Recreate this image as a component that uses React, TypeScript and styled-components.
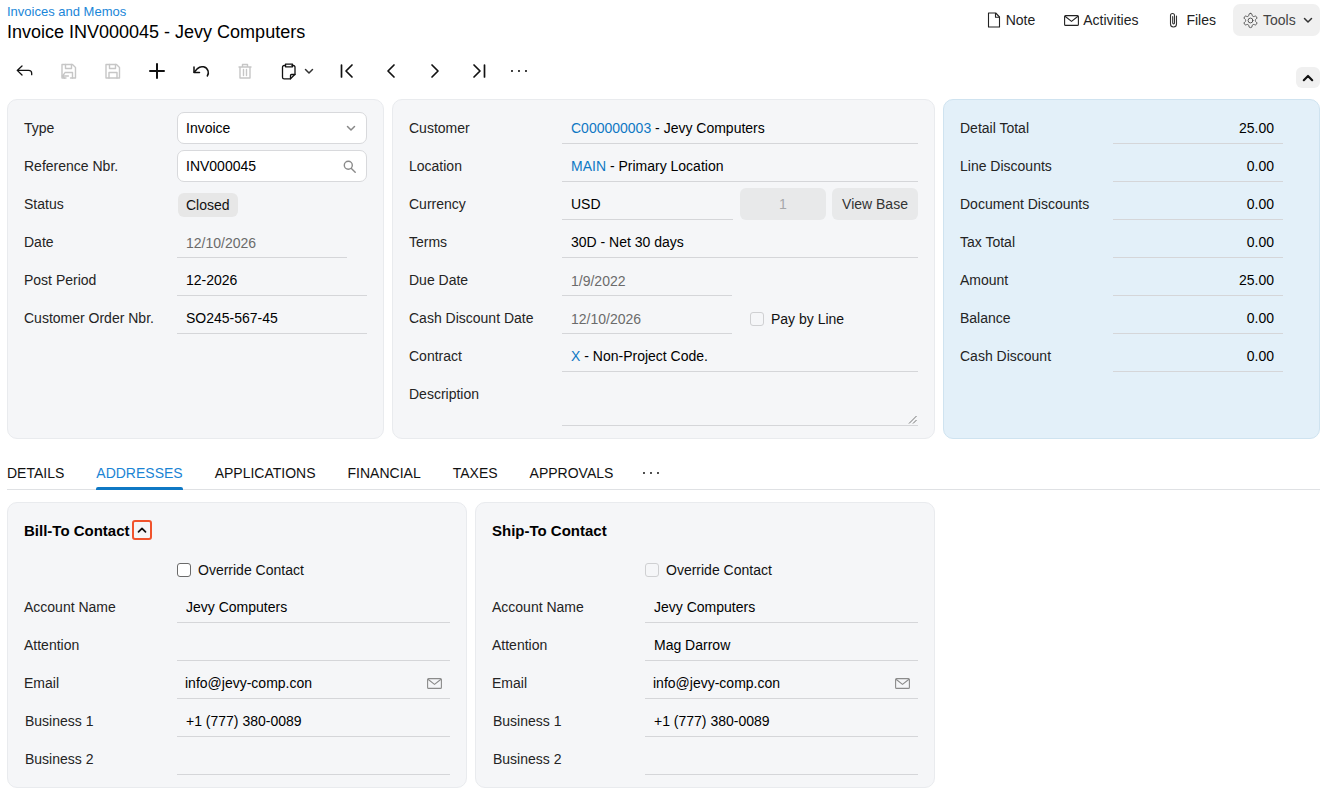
import React from 'react';
import styled, { createGlobalStyle } from 'styled-components';

const Global = createGlobalStyle`
  html, body { margin: 0; padding: 0; background: #fff; }
  body { font-family: "Liberation Sans", Arial, sans-serif; font-size: 14px; color: #000; }
  * { box-sizing: border-box; }
`;

const Page = styled.div`
  width: 1327px;
  height: 794px;
  padding: 0 7px;
  overflow: hidden;
`;

const Header = styled.header`
  display: flex;
  justify-content: space-between;
  align-items: flex-start;
  height: 54px;
`;
const TitleBlock = styled.div`
  display: flex;
  flex-direction: column;
  padding-top: 4px;
`;
const Breadcrumb = styled.a`
  font-size: 13px;
  line-height: 15px;
  color: #1a86d8;
`;
const Title = styled.h1`
  margin: 1px 0 0;
  font-size: 18px;
  line-height: 24px;
  font-weight: 400;
  color: #000;
`;
const HeaderActions = styled.div`
  display: flex;
  align-items: center;
  height: 32px;
  margin-top: 4px;
`;
const HeaderAction = styled.button<{ $gap: number; $right: number }>`
  display: flex;
  align-items: center;
  gap: ${p => p.$gap}px;
  margin-right: ${p => p.$right}px;
  padding: 0;
  border: 0;
  background: none;
  font: inherit;
  color: #222;
`;
const ToolsButton = styled.button`
  display: flex;
  align-items: center;
  width: 87px;
  height: 32px;
  padding: 0 0 0 9px;
  border: 0;
  border-radius: 7px;
  background: #f0f0f0;
  font: inherit;
  color: #444;
  svg:first-child { margin-right: 4px; }
  svg:last-child { margin-left: 7px; }
`;

const Toolbar = styled.div`
  display: flex;
  align-items: center;
  height: 34px;
  margin-bottom: 11px;
`;
const ToolButton = styled.button<{ $width?: number }>`
  display: flex;
  align-items: center;
  justify-content: center;
  flex: none;
  width: ${p => p.$width ?? 44}px;
  height: 32px;
  padding: 0;
  border: 0;
  background: none;
  color: #111;
`;
const ToolSplit = styled(ToolButton)`
  width: 58px;
  justify-content: flex-start;
  padding-left: 12px;
  svg:last-child { margin-left: 5px; }
`;
const ToolGroup = styled.div`
  display: flex;
  margin-left: -4px;
`;
const CollapseButton = styled.button`
  margin-left: auto;
  align-self: flex-end;
  display: flex;
  align-items: center;
  justify-content: center;
  width: 24px;
  height: 21px;
  padding: 0;
  border: 0;
  border-radius: 6px;
  background: #f0f0f0;
  color: #111;
`;

const PanelRow = styled.section`
  display: grid;
  grid-template-columns: 377px 543px 377px;
  gap: 8px;
  height: 340px;
`;
const Panel = styled.div<{ $blue?: boolean }>`
  display: flex;
  flex-direction: column;
  gap: 6px;
  padding: 12px 16px;
  border: 1px solid ${p => (p.$blue ? '#cfe3f0' : '#e9ebee')};
  border-radius: 10px;
  background: ${p => (p.$blue ? '#e3f0f9' : '#f5f6f8')};
`;
const Row = styled.div`
  display: grid;
  grid-template-columns: 153px 1fr;
  align-items: center;
  min-height: 32px;
`;
const Label = styled.label<{ $indent?: number }>`
  color: #242424;
  line-height: 16px;
  margin-left: ${p => p.$indent ?? 0}px;
`;
const Value = styled.div<{ $width?: number; $muted?: boolean; $right?: boolean }>`
  display: flex;
  align-items: center;
  justify-content: ${p => (p.$right ? 'flex-end' : 'space-between')};
  width: ${p => (p.$width ? `${p.$width}px` : '100%')};
  height: 32px;
  padding: ${p => (p.$muted ? 3 : 1)}px 9px 0;
  border-bottom: 1px solid #d5d6d9;
  color: ${p => (p.$muted ? '#6b6b6b' : '#000')};
`;
const ContactValue = styled(Value)<{ $shift?: boolean }>`
  padding-left: ${p => (p.$shift ? 8 : 9)}px;
  padding-right: 8px;
`;
const InputBox = styled.div`
  display: flex;
  align-items: center;
  justify-content: space-between;
  height: 32px;
  padding: 0 10px 0 8px;
  border: 1px solid #d8d9dc;
  border-radius: 7px;
  background: #fff;
  color: #000;
`;
const StatusChip = styled.span`
  display: inline-flex;
  align-items: center;
  justify-self: start;
  height: 24px;
  margin: 2px 0 0 1px;
  padding: 0 8px;
  border-radius: 6px;
  background: #e7e7e7;
  color: #111;
`;
const LinkText = styled.a`
  color: #0f78c4;
`;
const ValueGroup = styled.div`
  display: flex;
  align-items: center;
`;
const CurrencyGroup = styled(ValueGroup)`
  gap: 6px;
  ${Value} { margin-right: 1px; }
`;
const GrayField = styled.div<{ $disabled?: boolean }>`
  display: flex;
  align-items: center;
  justify-content: center;
  width: 86px;
  height: 32px;
  border-radius: 6px;
  background: #e8e9ea;
  color: ${p => (p.$disabled ? '#a6a8aa' : '#333')};
`;
const Check = styled.span<{ $disabled?: boolean }>`
  flex: none;
  display: block;
  width: 14px;
  height: 14px;
  border: 1px solid ${p => (p.$disabled ? '#cfd0d2' : '#6a6a6a')};
  border-radius: 3px;
  background: ${p => (p.$disabled ? '#f5f6f8' : '#fff')};
`;
const CheckLine = styled.div`
  display: flex;
  align-items: center;
  gap: 7px;
  color: #111;
`;
const PayLine = styled(CheckLine)`
  margin: 2px 0 0 18px;
`;
const TextArea = styled.div`
  position: relative;
  height: 48px;
  border-bottom: 1px solid #d5d6d9;
  svg { position: absolute; right: 1px; bottom: 1px; }
`;
const DescRow = styled(Row)`
  align-items: start;
  ${Label} { padding-top: 8px; }
`;

const Tabs = styled.nav`
  display: flex;
  align-items: stretch;
  gap: 32px;
  height: 33px;
  margin-top: 18px;
  border-bottom: 1px solid #dfe1e4;
`;
const Tab = styled.a<{ $active?: boolean }>`
  position: relative;
  padding-top: 8px;
  line-height: 16px;
  color: ${p => (p.$active ? '#1a84d4' : '#111')};
  &::after {
    content: '';
    display: ${p => (p.$active ? 'block' : 'none')};
    position: absolute;
    left: 0;
    right: 0;
    bottom: -1px;
    height: 3px;
    border-radius: 2px 2px 0 0;
    background: #0f78c4;
  }
`;
const TabMore = styled.span`
  display: block;
  margin-left: -3px;
  padding-top: 13px;
  line-height: 0;
  color: #222;
`;

const CardRow = styled.section`
  display: grid;
  grid-template-columns: 460px 460px;
  gap: 8px;
  margin-top: 12px;
`;
const Card = styled.div`
  display: flex;
  flex-direction: column;
  gap: 6px;
  height: 286px;
  padding: 12px 16px;
  border: 1px solid #e9ebee;
  border-radius: 10px;
  background: #f5f6f8;
`;
const CardTitle = styled.div`
  display: flex;
  align-items: center;
  height: 32px;
  padding-bottom: 2px;
  font-size: 15px;
  font-weight: 700;
  color: #000;
`;
const FocusToggle = styled.span`
  display: flex;
  align-items: center;
  justify-content: center;
  width: 20px;
  height: 20px;
  margin-left: 2px;
  border: 2px solid #f0532d;
  border-radius: 3px;
`;
const OverrideRow = styled(Row)`
  padding-top: 2px;
`;

const Svg = ({ size = 20, children, color = 'currentColor', sw = 1.3 }: { size?: number; children: React.ReactNode; color?: string; sw?: number }) => (
  <svg width={size} height={size} viewBox="0 0 20 20" fill="none" stroke={color} strokeWidth={sw} strokeLinecap="round" strokeLinejoin="round">
    {children}
  </svg>
);

const ChevronDown = ({ size = 10, color = '#333', sw = 1.5 }: { size?: number; color?: string; sw?: number }) => (
  <svg width={size} height={size} viewBox="0 0 10 10" fill="none" stroke={color} strokeWidth={sw} strokeLinecap="round" strokeLinejoin="round">
    <path d="M1.5 3.5 5 7l3.5-3.5" />
  </svg>
);
const ChevronUp = ({ size = 10, color = '#111', sw = 1.7 }: { size?: number; color?: string; sw?: number }) => (
  <svg width={size} height={size} viewBox="0 0 10 10" fill="none" stroke={color} strokeWidth={sw} strokeLinecap="round" strokeLinejoin="round">
    <path d="M1.5 6.8 5 3.3l3.5 3.5" />
  </svg>
);
const Dots = () => (
  <svg width="18" height="4" viewBox="0 0 18 4" fill="currentColor">
    <circle cx="2" cy="2" r="1.05" />
    <circle cx="9" cy="2" r="1.05" />
    <circle cx="16" cy="2" r="1.05" />
  </svg>
);
const MailIcon = ({ color = '#8b8b8b' }: { color?: string }) => (
  <svg width="15" height="11" viewBox="0 0 15 11" fill="none" stroke={color} strokeWidth="1.1" strokeLinejoin="round">
    <rect x="0.6" y="0.6" width="13.8" height="9.8" rx="1" />
    <path d="M1 1.2 7.5 6.4 14 1.2" />
  </svg>
);
const NoteIcon = () => (
  <svg width="14" height="16" viewBox="0 0 14 16" fill="none" stroke="#222" strokeWidth="1.1" strokeLinejoin="round">
    <path d="M1.5 1h7.2l3.8 4v10h-11z" />
    <path d="M8.5 1v4.2h4" />
  </svg>
);
const ClipIcon = () => (
  <svg width="12" height="16" viewBox="0 0 12 16" fill="none" stroke="#333" strokeWidth="1.1" strokeLinecap="round">
    <path d="M8.5 4v8a3 3 0 0 1-6 0V3.5a2 2 0 0 1 4 0V11a.9.9 0 0 1-1.8 0V4.5" />
  </svg>
);
const GearIcon = () => (
  <svg width="17" height="17" viewBox="0 0 24 24" fill="none" stroke="#555" strokeWidth="1.4" strokeLinecap="round" strokeLinejoin="round">
    <path d="M12.22 2h-.44a2 2 0 0 0-2 2v.18a2 2 0 0 1-1 1.73l-.43.25a2 2 0 0 1-2 0l-.15-.08a2 2 0 0 0-2.73.73l-.22.38a2 2 0 0 0 .73 2.73l.15.1a2 2 0 0 1 1 1.72v.51a2 2 0 0 1-1 1.74l-.15.09a2 2 0 0 0-.73 2.73l.22.38a2 2 0 0 0 2.73.73l.15-.08a2 2 0 0 1 2 0l.43.25a2 2 0 0 1 1 1.73V20a2 2 0 0 0 2 2h.44a2 2 0 0 0 2-2v-.18a2 2 0 0 1 1-1.73l.43-.25a2 2 0 0 1 2 0l.15.08a2 2 0 0 0 2.73-.73l.22-.39a2 2 0 0 0-.73-2.73l-.15-.08a2 2 0 0 1-1-1.74v-.5a2 2 0 0 1 1-1.74l.15-.09a2 2 0 0 0 .73-2.73l-.22-.38a2 2 0 0 0-2.73-.73l-.15.08a2 2 0 0 1-2 0l-.43-.25a2 2 0 0 1-1-1.73V4a2 2 0 0 0-2-2z" />
    <circle cx="12" cy="12" r="3.4" />
  </svg>
);
const SearchIcon = () => (
  <svg width="13" height="13" viewBox="0 0 13 13" fill="none" stroke="#8a8a8a" strokeWidth="1.4" strokeLinecap="round">
    <circle cx="5.3" cy="5.3" r="4" />
    <path d="m8.4 8.4 3.8 3.8" />
  </svg>
);
const Grip = () => (
  <svg width="9" height="9" viewBox="0 0 9 9" fill="none" stroke="#666" strokeWidth="0.9">
    <path d="M1 8.5 8.5 1M5 8.5 8.5 5" />
  </svg>
);

const toolsLeft = (
  <>
    <ToolButton>
      <Svg>
        <path d="M7 5 2.2 9.4 7 14M2.5 9.4H13.5c2 0 3.2 1.2 3.2 3.1v1.2" />
      </Svg>
    </ToolButton>
    <ToolButton>
      <Svg color="#c6c6c6" sw={1.4}>
        <path d="M7 17H3V3.5h10.5l3 3V17h-5" />
        <path d="M6.5 3.5v4h6v-4M6 11.5h7.5V17" />
        <path d="M5.5 12.5 3.2 15l2.3 2.2M3.4 15h6" />
      </Svg>
    </ToolButton>
    <ToolButton>
      <Svg color="#c6c6c6" sw={1.4}>
        <path d="M3 3.5h10.5l3 3v10.5H3z" />
        <path d="M6.5 3.5v4h6v-4M6 17v-5.5h8V17" />
      </Svg>
    </ToolButton>
    <ToolButton>
      <Svg sw={2}>
        <path d="M10 3v14M3 10h14" />
      </Svg>
    </ToolButton>
    <ToolButton>
      <Svg sw={1.5}>
        <path d="M3 6v5.5h5.5" />
        <path d="M3.2 11.3 6.5 7.6a6.4 6.4 0 0 1 10.6 2.4c.6 1.8.2 3.5-.8 5" />
      </Svg>
    </ToolButton>
    <ToolButton>
      <Svg color="#c6c6c6" sw={1.4}>
        <path d="M4 6h12M7.5 6V3.5h5V6M5 6v11h10V6M8.5 8.5V14.5M11.5 8.5V14.5" />
      </Svg>
    </ToolButton>
  </>
);

const App = () => (
  <Page>
    <Global />
    <Header>
      <TitleBlock>
        <Breadcrumb>Invoices and Memos</Breadcrumb>
        <Title>Invoice INV000045 - Jevy Computers</Title>
      </TitleBlock>
      <HeaderActions>
        <HeaderAction $gap={5} $right={29}><NoteIcon />Note</HeaderAction>
        <HeaderAction $gap={4} $right={30}><MailIcon color="#222" />Activities</HeaderAction>
        <HeaderAction $gap={6} $right={17}><ClipIcon />Files</HeaderAction>
        <ToolsButton><GearIcon />Tools<ChevronDown /></ToolsButton>
      </HeaderActions>
    </Header>

    <Toolbar>
      <ToolGroup>
        {toolsLeft}
        <ToolSplit>
          <Svg>
            <path d="M6.5 4.5H5.2c-1 0-1.7.7-1.7 1.7v10c0 .9.7 1.6 1.6 1.6h6.4l4.5-4.5V6.2c0-1-.7-1.7-1.7-1.7h-1.3" />
            <path d="M6.5 3.2h7v2.6h-7zM11.5 17.8V14.5c0-.6.4-1 1-1H16" />
          </Svg>
          <ChevronDown />
        </ToolSplit>
        <ToolButton>
          <Svg sw={1.7}>
            <path d="M4.5 4v12M15 4 9 10l6 6" />
          </Svg>
        </ToolButton>
        <ToolButton>
          <Svg sw={1.7}>
            <path d="M13 4 7 10l6 6" />
          </Svg>
        </ToolButton>
        <ToolButton>
          <Svg sw={1.7}>
            <path d="m7 4 6 6-6 6" />
          </Svg>
        </ToolButton>
        <ToolButton>
          <Svg sw={1.7}>
            <path d="M15.5 4v12M5 4l6 6-6 6" />
          </Svg>
        </ToolButton>
        <ToolButton $width={36}><Dots /></ToolButton>
      </ToolGroup>
      <CollapseButton><ChevronUp size={12} sw={1.8} /></CollapseButton>
    </Toolbar>

    <PanelRow>
      <Panel>
        <Row>
          <Label>Type</Label>
          <InputBox>Invoice<ChevronDown color="#888" /></InputBox>
        </Row>
        <Row>
          <Label>Reference Nbr.</Label>
          <InputBox>INV000045<SearchIcon /></InputBox>
        </Row>
        <Row>
          <Label>Status</Label>
          <StatusChip>Closed</StatusChip>
        </Row>
        <Row>
          <Label>Date</Label>
          <Value $width={170} $muted>12/10/2026</Value>
        </Row>
        <Row>
          <Label>Post Period</Label>
          <Value>12-2026</Value>
        </Row>
        <Row>
          <Label>Customer Order Nbr.</Label>
          <Value>SO245-567-45</Value>
        </Row>
      </Panel>

      <Panel>
        <Row>
          <Label>Customer</Label>
          <Value><span><LinkText>C000000003</LinkText> - Jevy Computers</span></Value>
        </Row>
        <Row>
          <Label>Location</Label>
          <Value><span><LinkText>MAIN</LinkText> - Primary Location</span></Value>
        </Row>
        <Row>
          <Label>Currency</Label>
          <CurrencyGroup>
            <Value $width={171}>USD</Value>
            <GrayField $disabled>1</GrayField>
            <GrayField>View Base</GrayField>
          </CurrencyGroup>
        </Row>
        <Row>
          <Label>Terms</Label>
          <Value>30D - Net 30 days</Value>
        </Row>
        <Row>
          <Label>Due Date</Label>
          <Value $width={170} $muted>1/9/2022</Value>
        </Row>
        <Row>
          <Label>Cash Discount Date</Label>
          <ValueGroup>
            <Value $width={170} $muted>12/10/2026</Value>
            <PayLine><Check $disabled />Pay by Line</PayLine>
          </ValueGroup>
        </Row>
        <Row>
          <Label>Contract</Label>
          <Value><span><LinkText>X</LinkText> - Non-Project Code.</span></Value>
        </Row>
        <DescRow>
          <Label>Description</Label>
          <TextArea><Grip /></TextArea>
        </DescRow>
      </Panel>

      <Panel $blue>
        {[
          ['Detail Total', '25.00'],
          ['Line Discounts', '0.00'],
          ['Document Discounts', '0.00'],
          ['Tax Total', '0.00'],
          ['Amount', '25.00'],
          ['Balance', '0.00'],
          ['Cash Discount', '0.00'],
        ].map(([label, value]) => (
          <Row key={label}>
            <Label>{label}</Label>
            <Value $width={170} $right>{value}</Value>
          </Row>
        ))}
      </Panel>
    </PanelRow>

    <Tabs>
      <Tab>DETAILS</Tab>
      <Tab $active>ADDRESSES</Tab>
      <Tab>APPLICATIONS</Tab>
      <Tab>FINANCIAL</Tab>
      <Tab>TAXES</Tab>
      <Tab>APPROVALS</Tab>
      <TabMore><Dots /></TabMore>
    </Tabs>

    <CardRow>
      <Card>
        <CardTitle>
          Bill-To Contact
          <FocusToggle><ChevronUp size={10} /></FocusToggle>
        </CardTitle>
        <OverrideRow>
          <span />
          <CheckLine><Check />Override Contact</CheckLine>
        </OverrideRow>
        <Row><Label>Account Name</Label><Value>Jevy Computers</Value></Row>
        <Row><Label>Attention</Label><Value /></Row>
        <Row>
          <Label>Email</Label>
          <ContactValue $shift>info@jevy-comp.con<MailIcon /></ContactValue>
        </Row>
        <Row><Label $indent={1}>Business 1</Label><Value>+1 (777) 380-0089</Value></Row>
        <Row><Label $indent={1}>Business 2</Label><Value /></Row>
      </Card>
      <Card>
        <CardTitle>Ship-To Contact</CardTitle>
        <OverrideRow>
          <span />
          <CheckLine><Check $disabled />Override Contact</CheckLine>
        </OverrideRow>
        <Row><Label>Account Name</Label><Value>Jevy Computers</Value></Row>
        <Row><Label>Attention</Label><Value>Mag Darrow</Value></Row>
        <Row>
          <Label>Email</Label>
          <ContactValue $shift>info@jevy-comp.con<MailIcon /></ContactValue>
        </Row>
        <Row><Label $indent={1}>Business 1</Label><Value>+1 (777) 380-0089</Value></Row>
        <Row><Label $indent={1}>Business 2</Label><Value /></Row>
      </Card>
    </CardRow>
  </Page>
);

export default App;
